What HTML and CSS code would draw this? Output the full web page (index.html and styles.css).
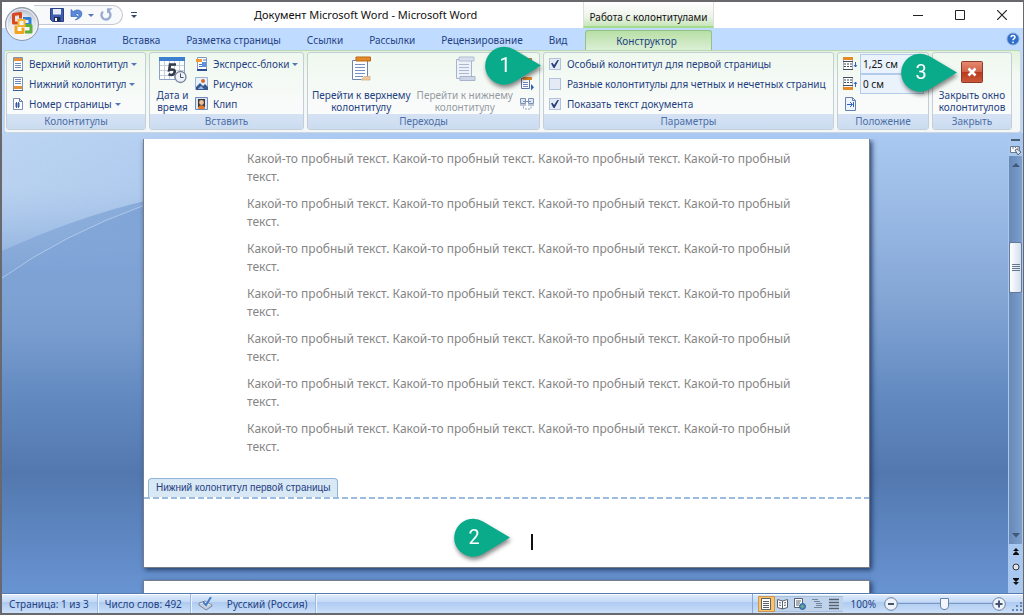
FILE: index.html
```html
<!DOCTYPE html>
<html lang="ru">
<head>
<meta charset="utf-8">
<title>Документ Microsoft Word - Microsoft Word</title>
<link rel="stylesheet" href="styles.css">
</head>
<body>
<div class="window">
  <header class="header">
    <div class="quick">
      <button class="office" aria-label="Кнопка Office">
        <svg width="36" height="36" viewBox="0 0 36 36">
          <defs><radialGradient id="orb" cx=".5" cy=".7" r=".7"><stop offset="0" stop-color="#fff"/><stop offset=".6" stop-color="#e4e7ee"/><stop offset="1" stop-color="#a9b1c1"/></radialGradient></defs>
          <circle cx="18" cy="18" r="16.5" fill="url(#orb)" stroke="#8f99ad"/>
          <circle cx="18" cy="18" r="15" fill="none" stroke="#fff" opacity=".8"/>
          <g fill="none" stroke-width="3" stroke-linejoin="round">
            <path d="M15 17h-5.500v-8.500l7-1v5" stroke="#d9481c"/>
            <path d="M19 12.500h7v6h-5" stroke="#2f7fd6"/>
            <path d="M12 19.500v7h7v-5" stroke="#f2a41e"/>
            <path d="M21 19.500h6v6.500h-6" stroke="#5fae3c"/>
          </g>
          <rect x="14.500" y="14" width="6" height="6" fill="none" stroke="#f5b42c" stroke-width="2"/>
        </svg>
      </button>
      <div class="quick-bar">
        <button aria-label="Сохранить"><svg width="14" height="14" viewBox="0 0 14 14"><path d="M.5.500h13v13h-11l-2-2z" fill="#3f5fae" stroke="#2a3f86"/><path d="M3 1h8v5.500h-8z" fill="#e6edf9"/><path d="M4 9h6.500v4.500h-6.500z" fill="#1f2d5c"/><path d="M5 10h2v3h-2z" fill="#fff"/></svg></button>
        <button aria-label="Отменить"><svg width="14" height="14" viewBox="0 0 14 14"><path d="M2 1.500v7h7l-2.600-2.300c2.200-1.200 3.800-.4 3.400 1.400-.3 1.600-1.500 2.700-3.500 4.300 4.500-1.200 6.800-3.600 6.500-6.700-.4-3.400-5.200-4.300-8.600-1.600z" fill="#5b8ad8" stroke="#3566b8" stroke-width=".7"/></svg></button>
        <i class="caret"></i>
        <button aria-label="Повторить"><svg width="14" height="14" viewBox="0 0 14 14"><path d="M9 3a4.500 4.500 0 1 1-5 .6" fill="none" stroke="#9aaccd" stroke-width="2.400"/><path d="M8 .2h5.500l-5.500 5.300z" fill="#9aaccd"/></svg></button>
      </div>
      <button class="more" aria-label="Настройка панели"><i class="bar"></i><i class="caret dark"></i></button>
    </div>
    <h1 class="title">Документ Microsoft Word - Microsoft Word</h1>
    <div class="context">Работа с колонтитулами</div>
    <div class="controls">
      <button aria-label="Свернуть"><svg width="10" height="10"><path d="M0 5.500h10" stroke="#222"/></svg></button>
      <button aria-label="Развернуть"><svg width="10" height="10"><path d="M.5.500h9v9h-9z" fill="none" stroke="#222"/></svg></button>
      <button aria-label="Закрыть"><svg width="10" height="10"><path d="M0 0l10 10M10 0l-10 10" stroke="#222" stroke-width="1.200"/></svg></button>
    </div>
    <nav class="tabs">
      <a href="#home">Главная</a><a href="#insert">Вставка</a><a href="#layout">Разметка страницы</a><a href="#refs">Ссылки</a><a href="#mail">Рассылки</a><a href="#review">Рецензирование</a><a href="#view">Вид</a>
    </nav>
    <div class="tab-slot"><a class="tab-active" href="#design">Конструктор</a></div>
    <div class="help">
      <button aria-label="Справка"><svg width="14" height="14" viewBox="0 0 14 14"><circle cx="7" cy="7" r="6" fill="#2f6fc9" stroke="#86a9db"/><path d="M5 5.300c0-2.600 4-2.500 4 0 0 1.400-2 1.400-2 3" fill="none" stroke="#fff" stroke-width="1.500"/><circle cx="7" cy="10.300" r=".9" fill="#fff"/></svg></button>
    </div>
  </header>

  <main class="ribbon">
    <section class="group">
      <div class="body rows">
        <button class="cmd"><svg class="ic" viewBox="0 0 14 14"><path d="M2.500.500h9v13h-9z" fill="#fff" stroke="#7c90b8"/><path d="M3 1h8v3h-8z" fill="#e69138"/><path d="M4 6.500h6M4 8.500h6M4 10.500h6" stroke="#7089b8"/><path d="M2 13.500h10" stroke="#405d94"/></svg>Верхний колонтитул<i class="caret"></i></button>
        <button class="cmd"><svg class="ic" viewBox="0 0 14 14"><path d="M2.500.500h9v13h-9z" fill="#fff" stroke="#7c90b8"/><path d="M3 9h8v3h-8z" fill="#e69138"/><path d="M4 2.500h6M4 4.500h6M4 6.500h6" stroke="#7089b8"/><path d="M2 13.500h10" stroke="#405d94"/></svg>Нижний колонтитул<i class="caret"></i></button>
        <button class="cmd"><svg class="ic" viewBox="0 0 14 14"><path d="M2.500 1.500h6l3 3v8h-9z" fill="#fff" stroke="#7c90b8"/><path d="M8.500 1.500v3h3" fill="none" stroke="#5c75a5"/><path d="M5.500 5v6M7.500 5v6M4 7h5M4 9h5" stroke="#365f9f"/></svg>Номер страницы<i class="caret"></i></button>
      </div>
      <h2>Колонтитулы</h2>
    </section>

    <section class="group">
      <div class="body">
        <button class="big narrow"><svg width="30" height="28" viewBox="0 0 30 28"><path d="M1.500 1.500h25v22h-25z" fill="#fff" stroke="#8aa0c4"/><path d="M1 1h26v4h-26z" fill="#3f7fd0"/><path d="M2 9.500h24M2 14.500h24M2 19.500h24M6.500 5v18M11.500 5v18M16.500 5v18M21.500 5v18" stroke="#c3cede"/><path d="M18 8.500h-6l-.8 5.500c4-1.500 6.300.3 5.300 2.800-1 2.400-3.500 2.500-6 1.500" fill="none" stroke="#333b4d" stroke-width="2.600"/><circle cx="22.500" cy="21" r="5.500" fill="#eef2f8" stroke="#76839b" stroke-width="1.300"/><path d="M22.500 17.500v4h3" fill="none" stroke="#3d5278"/></svg><span>Дата и<br>время</span></button>
        <div class="rows">
          <button class="cmd"><svg class="ic" viewBox="0 0 14 14"><path d="M2.500.500h9v12h-9z" fill="#fff" stroke="#8097bf"/><path d="M1 2h6v3h-6z" fill="#f09a32"/><path d="M7 5h4v5h-4z" fill="#5c92dc"/><path d="M4 7.500h3M4 9.500h3M8 3h3" stroke="#4777bd"/><path d="M2 13h10" stroke="#2b4f93" stroke-width="2"/></svg>Экспресс-блоки<i class="caret"></i></button>
          <button class="cmd"><svg class="ic" viewBox="0 0 14 14"><path d="M.5.500h12v12h-12z" fill="#e7f1fd" stroke="#9db1d3"/><path d="M1 13v-3l4-4 3 3 2-2 3 3v3z" fill="#36588f"/><circle cx="8" cy="4" r="2" fill="#d9662c"/><path d="M3 12l3-3 3 3z" fill="#9bbbe6"/></svg>Рисунок</button>
          <button class="cmd"><svg class="ic" viewBox="0 0 14 14"><path d="M.5.500h12v12h-12z" fill="#dbe6f5" stroke="#6f8ab8"/><path d="M3 2h7v8h-7z" fill="#3a3a45"/><circle cx="6.500" cy="5.500" r="2.400" fill="#f3c08d"/><path d="M3 12c0-5 7-5 7 0z" fill="#e07a2c"/></svg>Клип</button>
        </div>
      </div>
      <h2>Вставить</h2>
    </section>

    <section class="group">
      <div class="body spread">
        <button class="big"><svg width="22" height="28" viewBox="0 0 22 28"><path d="M2.500 4.500h15v19h-15z" fill="#fff" stroke="#6d83ab"/><path d="M6 1h14.500v4h-14.500z" fill="#e58a26" stroke="#b9681b"/><path d="M5 8.500h10M5 11.500h10M5 14.500h10M5 17.500h10M5 20.500h8" stroke="#7790bf"/><path d="M14 20.500h6v3.500h-9z" fill="#f3c896" stroke="#c9ab86" stroke-width=".7"/></svg><span>Перейти к верхнему<br>колонтитулу</span></button>
        <button class="big" disabled><svg width="22" height="28" viewBox="0 0 22 28"><path d="M2.500 3.500h15v19h-15z" fill="#eef2f8" stroke="#a6b4cc"/><path d="M5 1h15v4h-15z" fill="#d8e0ee" stroke="#b0bdd3"/><path d="M5 8.500h10M5 11.500h10M5 14.500h10M5 17.500h10" stroke="#aab8d2"/><path d="M6 20.500h15v4h-15z" fill="#cbd6e8" stroke="#a6b4cc"/></svg><span>Перейти к нижнему<br>колонтитулу</span></button>
        <div class="rows">
          <button class="cmd icon" aria-label="Предыдущий раздел"><svg class="ic" viewBox="0 0 14 14"><path d="M1.500 2.500h8v10h-8z" fill="#fff" stroke="#7990ba"/><path d="M3 1h9v3h-9z" fill="#df7140"/></svg></button>
          <button class="cmd icon" aria-label="Следующий раздел"><svg class="ic" viewBox="0 0 14 14"><path d="M1.500 1.500h8v10h-8z" fill="#fff" stroke="#5c75a5"/><path d="M3 0h9v3h-9z" fill="#e58a26"/><path d="M3 5.500h5M3 7.500h5M3 9.500h5" stroke="#7089b8"/><path d="M11 7l3 3.300-3 3.200z" fill="#2c63b8"/></svg></button>
          <button class="cmd icon" aria-label="Как в предыдущем" disabled><svg class="ic" viewBox="0 0 14 14"><path d="M.5 1.500h5v5h-5zM8.500 1.500h5v5h-5z" fill="#dfe7f3" stroke="#7d91b6"/><path d="M3 4.500h8M0 8h6M8 8h6" stroke="#7d91b6"/><path d="M3.500 9.500v3M5 12h6M11 9.500v3" fill="none" stroke="#92a3c2" stroke-dasharray="2 1"/></svg></button>
        </div>
      </div>
      <h2>Переходы</h2>
    </section>

    <section class="group">
      <div class="body rows options">
        <label class="cmd"><input type="checkbox" checked>Особый колонтитул для первой страницы</label>
        <label class="cmd"><input type="checkbox">Разные колонтитулы для четных и нечетных страниц</label>
        <label class="cmd"><input type="checkbox" checked>Показать текст документа</label>
      </div>
      <h2>Параметры</h2>
      <div class="callout callout-one"><svg width="60" height="40" viewBox="0 0 60 40"><path d="M58 19.500L31 3.500A19 19 0 1 0 31 36z" fill="#0aab8b"/></svg><b>1</b></div>
    </section>

    <section class="group">
      <div class="body rows position">
        <div class="field"><svg class="ic" viewBox="0 0 14 14"><path d="M.5.500h9v12h-9z" fill="#fff" stroke="#a3adbf"/><path d="M0 0h10v3h-10z" fill="#e58a26"/><path d="M0 4.500h10M0 12.500h10" stroke="#434d60"/><path d="M1 7h8M1 9.500h8" stroke="#434d60" stroke-dasharray="2 1"/><path d="M12.500 5v5M11 8l1.500 2 1.500-2" fill="none" stroke="#3566b8"/></svg><input type="text" value="1,25 см" aria-label="От верхнего края"></div>
        <div class="field"><svg class="ic" viewBox="0 0 14 14"><path d="M.5.500h9v12h-9z" fill="#fff" stroke="#a3adbf"/><path d="M0 10h10v3h-10z" fill="#e58a26"/><path d="M0 .5h10M0 8.500h10" stroke="#434d60"/><path d="M1 3h8M1 5.500h8" stroke="#434d60" stroke-dasharray="2 1"/><path d="M12.500 10v-5M11 7l1.500-2 1.500 2" fill="none" stroke="#3566b8"/></svg><input type="text" value="0 см" aria-label="От нижнего края"></div>
        <button class="cmd icon" aria-label="Вставить табуляцию"><svg class="ic" viewBox="0 0 14 14"><path d="M1.500.500h7l3 3v10h-10z" fill="#eef4fc" stroke="#6580b0"/><path d="M8.500.500v3h3" fill="none" stroke="#6580b0"/><path d="M3 7.500h5M6 5l2.500 2.500-2.500 2.500M9.500 5v5" fill="none" stroke="#2c63b8"/></svg></button>
      </div>
      <h2>Положение</h2>
    </section>

    <section class="group">
      <div class="body center">
        <button class="big"><svg width="24" height="28" viewBox="0 0 24 28"><defs><linearGradient id="red" x2="0" y2="1"><stop offset="0" stop-color="#e58a70"/><stop offset=".5" stop-color="#cf6146"/><stop offset=".52" stop-color="#b93a1c"/><stop offset="1" stop-color="#cc5a3b"/></linearGradient></defs><rect x="1.500" y="5.500" width="21" height="21" rx="1" fill="url(#red)" stroke="#8e3b2b"/><path d="M8.500 12.500l7 7M15.500 12.500l-7 7" stroke="#fff" stroke-width="2.600"/></svg><span>Закрыть окно<br>колонтитулов</span></button>
      </div>
      <h2>Закрыть</h2>
      <div class="callout callout-three"><svg width="60" height="40" viewBox="0 0 60 40"><path d="M58 19.500L31 3.500A19 19 0 1 0 31 36z" fill="#0aab8b"/></svg><b>3</b></div>
    </section>
  </main>

  <div class="workspace">
    <svg class="swoosh" width="500" height="200" viewBox="0 0 500 200">
      <defs><linearGradient id="fade" gradientUnits="userSpaceOnUse" x1="0" y1="50" x2="0" y2="200"><stop offset="0" stop-color="#658fca" stop-opacity=".55"/><stop offset="1" stop-color="#658fca" stop-opacity="0"/></linearGradient></defs>
      <path d="M0 112Q75 78 143 62L500 40V200H0z" fill="url(#fade)"/>
      <path d="M0 139Q60 96 143 66L500 50V200H0z" fill="url(#fade)" opacity=".5"/>
      <path d="M0 139Q60 96 143 66" fill="none" stroke="#c0d5f0" opacity=".7"/>
    </svg>
    <div class="document">
      <article class="page">
        <div class="text">
          <p>Какой-то пробный текст. Какой-то пробный текст. Какой-то пробный текст. Какой-то пробный текст.</p>
          <p>Какой-то пробный текст. Какой-то пробный текст. Какой-то пробный текст. Какой-то пробный текст.</p>
          <p>Какой-то пробный текст. Какой-то пробный текст. Какой-то пробный текст. Какой-то пробный текст.</p>
          <p>Какой-то пробный текст. Какой-то пробный текст. Какой-то пробный текст. Какой-то пробный текст.</p>
          <p>Какой-то пробный текст. Какой-то пробный текст. Какой-то пробный текст. Какой-то пробный текст.</p>
          <p>Какой-то пробный текст. Какой-то пробный текст. Какой-то пробный текст. Какой-то пробный текст.</p>
          <p>Какой-то пробный текст. Какой-то пробный текст. Какой-то пробный текст. Какой-то пробный текст.</p>
        </div>
        <div class="footer-mark"><span>Нижний колонтитул первой страницы</span></div>
        <svg class="dash" height="2" width="100%"><path d="M0 1h1200" stroke="#7ba7d6" stroke-width="1.500" stroke-dasharray="6 3"/></svg>
        <div class="footer-area"><i class="cursor"></i>
          <div class="callout callout-two"><svg width="60" height="40" viewBox="0 0 60 40"><path d="M58 19.500L31 3.500A19 19 0 1 0 31 36z" fill="#0aab8b"/></svg><b>2</b></div>
        </div>
      </article>
      <div class="page next"></div>
    </div>
    <div class="scroll">
      <i class="split"></i>
      <button aria-label="Линейка"><svg width="12" height="12" viewBox="0 0 12 12"><path d="M.5 2.500h9v6h-9z" fill="#fff" stroke="#6d7b92"/><path d="M3 2v3M5.500 2v2M8 2v3" stroke="#6d7b92"/><path d="M5 6l3 5 3-3-4-3z" fill="#dde5f0" stroke="#56647e"/></svg></button>
      <div class="track">
        <button aria-label="Вверх"><svg width="8" height="5"><path d="M0 5l4-4 4 4z" fill="#3f5878"/></svg></button>
        <div class="thumb"><i></i><i></i><i></i><i></i></div>
        <button aria-label="Вниз"><svg width="8" height="5"><path d="M0 0h8l-4 4.500z" fill="#3f5878"/></svg></button>
      </div>
      <button class="jump" aria-label="Предыдущая страница"><svg width="6" height="7"><path d="M0 3l3-3 3 3zM0 6l3-3 3 3zM0 6h6v1h-6z" fill="#111"/></svg></button>
      <button class="jump" aria-label="Выбор объекта"><svg width="8" height="8"><circle cx="4" cy="4" r="3" fill="#e1e5ec" stroke="#333"/></svg></button>
      <button class="jump" aria-label="Следующая страница"><svg width="6" height="7"><path d="M0 0h6v1h-6zM0 1h6l-3 3zM0 4h6l-3 3z" fill="#111"/></svg></button>
    </div>
  </div>

  <footer class="status">
    <button class="cell">Страница: 1 из 3</button>
    <button class="cell">Число слов: 492</button>
    <button class="cell lang"><svg width="16" height="14" viewBox="0 0 16 14"><path d="M1 6l6-2 7 4-6 4z" fill="#fff" stroke="#75869f"/><path d="M1 6v2l7 5 6-4v-1" fill="#c4cfdf" stroke="#75869f"/><path d="M5 5l3 3 5-8" fill="none" stroke="#4579c4" stroke-width="2"/></svg>Русский (Россия)</button>
    <div class="views">
      <button class="on" aria-label="Разметка страницы"><svg width="12" height="12"><path d="M1.500.500h9v11h-9z" fill="#fff" stroke="#57626f"/><path d="M3 3.500h6M3 5.500h6M3 7.500h6M3 9.500h6" stroke="#57626f"/></svg></button>
      <button aria-label="Чтение"><svg width="12" height="12"><path d="M.5 1.500l5 1.500 5-1.500v8l-5 1.500-5-1.500zM5.500 3v8" fill="#fff" stroke="#57626f"/><path d="M2 4.500l2 .5M2 7l2 .5M7 5l2-.5M7 7.500l2-.5" stroke="#57626f"/></svg></button>
      <button aria-label="Веб-документ"><svg width="12" height="12"><path d="M.5.500h8v9h-8z" fill="#fff" stroke="#57626f"/><path d="M2 3h5M2 5h4M2 7h3" stroke="#57626f"/><circle cx="8.500" cy="8.500" r="3" fill="#4a88c4" stroke="#2d6094"/><path d="M7 8l2-1 1 2-2 1z" fill="#79b56a"/></svg></button>
      <button aria-label="Структура"><svg width="12" height="12"><path d="M1 1.500h6M3 3.500h6M5 5.500h6M5 7.500h6M3 9.500h8" stroke="#74869f"/></svg></button>
      <button aria-label="Черновик"><svg width="12" height="12"><path d="M1 1.500h10M1 4.500h10M1 7.500h10M1 10.500h10" stroke="#57626f" stroke-width="1.500"/></svg></button>
    </div>
    <button class="percent">100%</button>
    <div class="zoom">
      <button aria-label="Уменьшить"><svg width="14" height="14"><circle cx="7" cy="7" r="6.300" fill="#eef3fb" stroke="#6b7f9f"/><path d="M4 7h6" stroke="#44546f" stroke-width="2"/></svg></button>
      <input type="range" min="0" max="100" value="49" aria-label="Масштаб">
      <button aria-label="Увеличить"><svg width="14" height="14"><circle cx="7" cy="7" r="6.300" fill="#eef3fb" stroke="#6b7f9f"/><path d="M3.500 7h7M7 3.500v7" stroke="#44546f" stroke-width="2"/></svg></button>
    </div>
    <svg class="grip" width="10" height="10"><path d="M8 1h2v2h-2zM4 4h2v2h-2zM8 4h2v2h-2zM0 8h2v2h-2zM4 8h2v2h-2zM8 8h2v2h-2z" fill="#6884b0"/></svg>
  </footer>
</div>
</body>
</html>
```

FILE: styles.css
```css
* { box-sizing: border-box; }
body {
  margin: 0;
  font-family: "Noto Sans", "Open Sans", sans-serif;
  font-size: 10px;
  line-height: 12px;
  color: #1f4182;
}
button, input { font: inherit; color: inherit; }
button { margin: 0; padding: 0; border: 0; background: none; }
svg { display: block; flex: none; }
a { color: inherit; text-decoration: none; }
h1, h2, p { margin: 0; font-weight: normal; }

.window {
  display: flex;
  flex-direction: column;
  height: 100vh;
  border: 2px solid #69686c;
  border-width: 2px 1px 2px 2px;
  background: #bfdbff;
  overflow: hidden;
}

/* Title bar and tabs */
.header {
  display: grid;
  grid-template-columns: 250px 331px 131px 1fr;
  grid-template-rows: 26px 22px;
  background: linear-gradient(#fff 26px, #bfdbff 26px);
}
.quick { display: flex; align-items: center; gap: 8px; }
.office { position: relative; width: 36px; height: 36px; margin: 18px 0 0 2px; z-index: 2; }
.quick-bar {
  display: flex;
  align-items: center;
  gap: 5px;
  height: 20px;
  margin-left: -14px;
  padding: 0 9px 0 16px;
  border: 1px solid #c3c7cf;
  border-left: 0;
  border-radius: 0 10px 10px 0;
  background: #f8f9fb;
}
.caret { width: 0; border: 3px solid transparent; border-top-color: #5478b4; border-bottom: 0; }
.caret.dark { border-top-color: #33486d; }
.more { display: flex; flex-direction: column; align-items: center; gap: 2px; }
.more .bar { width: 6px; height: 1px; background: #33486d; }
.title { padding-left: 2px; font-size: 11px; line-height: 26px; color: #111; white-space: nowrap; }
.context {
  border: solid #dcdfdd;
  border-width: 0 1px;
  border-bottom: 2px solid #a4dc8c;
  background: linear-gradient(#fff, #edf3ea 60%, #c8e6b9);
  color: #111;
  line-height: 30px;
  text-align: center;
  white-space: nowrap;
}
.controls { display: flex; justify-content: flex-end; align-items: center; gap: 32px; padding-right: 16px; }
.tabs { grid-column: 1 / 3; display: flex; gap: 26px; padding-left: 55px; line-height: 24px; white-space: nowrap; }
.tab-slot { padding: 2px 2px 0; }
.tab-active {
  display: block;
  height: 20px;
  border: 1px solid #93c286;
  border-bottom: 0;
  border-radius: 3px 3px 0 0;
  background: linear-gradient(#b7dfa5, #dcefd5);
  line-height: 20px;
  padding-right: 4px;
  text-align: center;
}
.help { display: flex; justify-content: flex-end; align-items: center; padding-right: 3px; }

/* Ribbon */
.ribbon {
  display: grid;
  grid-template-columns: 140fr 155fr 233fr 291fr 92fr 80fr;
  gap: 3px;
  margin: 0 2px;
  padding: 1px 8px 2px 1px;
  border: 1px solid #cbd7df;
  border-top-color: #b8d7b2;
  border-radius: 3px;
  background: linear-gradient(#e2f2dd, #f4f9f4 30%, #f4f7f9);
  box-shadow: 0 1px 1px #8fa9cc;
}
.group {
  position: relative;
  display: flex;
  flex-direction: column;
  min-width: 0;
  border: 1px solid #c3cfd5;
  border-radius: 3px;
  background: linear-gradient(#eff8ee, #f6faf7 50%, #fdfdfe);
}
.body { display: flex; height: 61px; padding: 1px 2px 0; white-space: nowrap; }
.group h2 {
  height: 15px;
  background: linear-gradient(#d5e2f4, #cbdcf0);
  color: #4d6fa9;
  font-size: 10px;
  line-height: 15px;
  text-align: center;
}
.rows { display: flex; flex-direction: column; }
.cmd { display: flex; align-items: center; gap: 4px; height: 20px; padding-left: 2px; }
.cmd .caret { margin-left: -1px; }
.cmd.icon { padding-left: 1px; }
.ic { width: 14px; height: 14px; }
.big { display: flex; flex-direction: column; align-items: center; gap: 5px; padding-top: 2px; }
.big.narrow { width: 41px; }
.big:disabled { color: #969aa3; }
.spread { justify-content: space-between; padding-right: 5px; padding-left: 4px; }
.center { justify-content: center; }
.options .cmd { gap: 6px; padding-left: 2px; }
.options input {
  appearance: none;
  flex: none;
  display: grid;
  place-items: center;
  width: 12px;
  height: 12px;
  margin: 0;
  border: 1px solid #b0c2dc;
  background: #e4ebf5;
}
.options { padding-left: 3px; }
.options input:checked::before {
  content: "";
  width: 8px;
  height: 8px;
  background: #243f78;
  clip-path: polygon(0 45%, 18% 35%, 38% 62%, 80% 0, 100% 0, 45% 100%, 32% 100%);
}
.position { padding-left: 5px; }
.field { display: flex; align-items: center; gap: 3px; height: 20px; }
.field input {
  width: 64px;
  min-width: 0;
  height: 20px;
  padding: 0 2px;
  border: 1px solid #b3cbeb;
  background: #eaf2fb;
  color: #111;
}

/* Numbered markers */
.callout { position: absolute; z-index: 3; width: 60px; height: 40px; filter: drop-shadow(1px 3px 2px #0007); }
.callout svg { position: absolute; }
.callout b {
  position: relative;
  display: block;
  width: 44px;
  color: #fff;
  font: 20px/39px Roboto, sans-serif;
  text-align: center;
}
.callout-one { left: -61px; top: -7px; }
.callout-three { left: -34px; top: 0; }
.callout-two { left: 308px; top: 19px; }

/* Document area */
.workspace {
  position: relative;
  flex: 1;
  display: flex;
  min-height: 0;
  padding-top: 6px;
  background: linear-gradient(#a9c8f2, #9fbfe9 12%, #84a6d5 36%, #6189c0 58%, #5378af 74%, #6894d2);
}
.swoosh { position: absolute; left: 0; top: 6px; }
.workspace::before {
  content: "";
  position: absolute;
  inset: 0 60% 70% 0;
  background: linear-gradient(90deg, #c3d9f2, #c3d9f200);
  opacity: .7;
  mask-image: linear-gradient(#000 40%, transparent);
}
.document { position: relative; flex: 1; padding: 0 138px 0 141px; overflow: hidden; }
.page {
  border: 1px solid #777d88;
  border-top: 0;
  background: #fff;
  box-shadow: 2px 2px 5px #263f6b;
}
.page.next { height: 40px; margin-top: 12px; border-top: 1px solid #777d88; }
.text { padding: 11px 70px 0 103px; color: #858585; font-size: 12px; line-height: 18px; }
.text p { margin-bottom: 9px; }
.footer-mark { padding: 13px 0 0 4px; }
.footer-mark span {
  display: inline-block;
  padding: 0 7px;
  border: 1px solid #8fb4d9;
  border-bottom: 0;
  border-radius: 4px 4px 0 0;
  background: #d9e8f5;
  font-family: "Liberation Sans", sans-serif;
  line-height: 18px;
  vertical-align: bottom;
}
.footer-area { position: relative; height: 68px; padding: 35px 52px 0 103px; }
.cursor { display: block; width: 2px; height: 16px; margin: 0 auto; background: #111; }

.scroll { position: relative; display: flex; flex-direction: column; align-items: center; width: 15px; padding-bottom: 4px; background: #a9c8f0; }
.scroll .split { width: 9px; height: 2px; background: #4c5d78; }
.scroll > button { margin: 3px 0 0; }
.scroll .jump { display: grid; place-items: center; height: 11px; margin: 2px 0; }
.track {
  flex: 1;
  display: flex;
  flex-direction: column;
  align-items: center;
  width: 13px;
  padding: 6px 0;
  background: linear-gradient(90deg, #6889b6, #7c9fce);
}
.thumb {
  display: flex;
  flex-direction: column;
  align-items: center;
  justify-content: center;
  gap: 1px;
  width: 13px;
  height: 51px;
  margin: 75px 0 auto;
  border: 1px solid #64799a;
  border-radius: 2px;
  background: linear-gradient(90deg, #fff, #d1def0);
}
.thumb i { width: 8px; height: 1px; background: #66758e; }

/* Status bar */
.status {
  display: flex;
  align-items: stretch;
  height: 20px;
  border-top: 1px solid #567db1;
  background: linear-gradient(#e1edfc, #c4daf6 40%, #afcbf1 45%, #cbe0f9);
  box-shadow: inset 0 1px #fff;
  white-space: nowrap;
}
.cell { padding: 0 8px 0 7px; border-right: 1px solid #9cb9df; box-shadow: 1px 0 #eaf3fe; }
.lang { display: flex; align-items: center; gap: 13px; }
.views { display: flex; align-items: center; margin-left: auto; padding-left: 5px; border-left: 1px solid #86a8d6; }
.views button { display: grid; place-items: center; width: 17px; height: 16px; background: #c0d3ec; border: solid #a9c0e0; border-width: 1px 0; }
.views .on { background: #ffc365; border: 1px solid #c99857; }
.percent { padding: 0 8px; }
.zoom { display: flex; align-items: center; }
.zoom input { appearance: none; width: 94px; height: 14px; margin: 0; background: linear-gradient(#7d98c0, #7d98c0) center / 100% 1px no-repeat; }
.zoom input::-webkit-slider-thumb {
  appearance: none;
  width: 9px;
  height: 12px;
  border: 1px solid #6b7f9f;
  border-radius: 1px 1px 5px 5px;
  background: #f2f6fc;
}
.grip { align-self: flex-end; margin: 0 1px 2px 6px; }
```
